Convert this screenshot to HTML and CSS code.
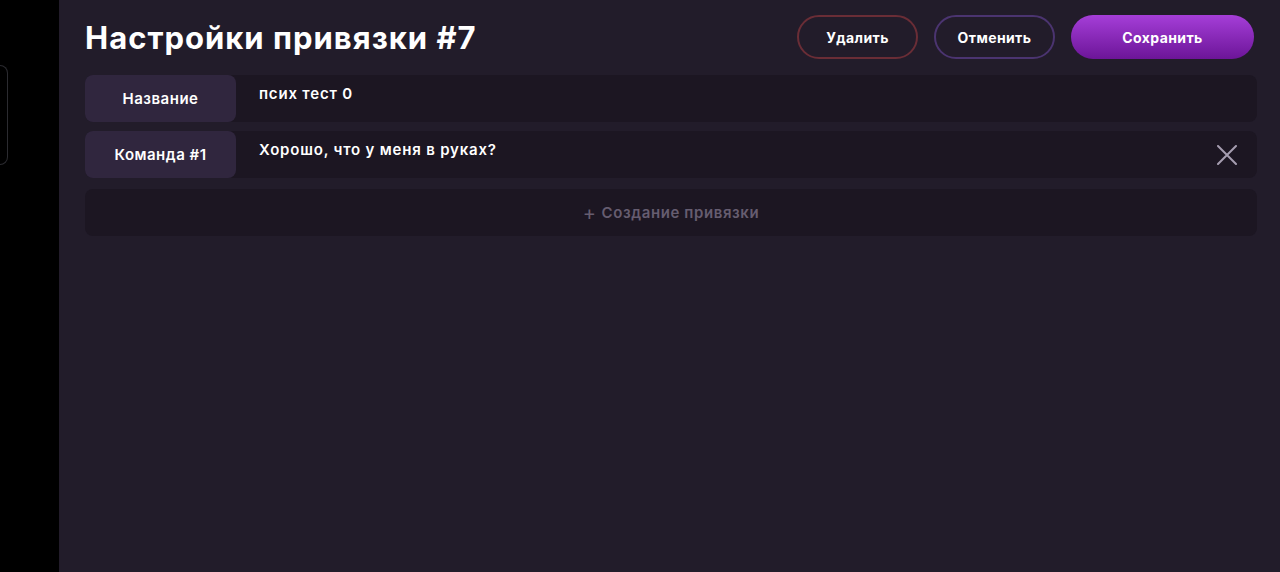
FILE: index.html
```html
<!DOCTYPE html>
<html>
<head>
	<title>Настройки привязки</title>
	<meta charset="UTF-8">
	<link rel="stylesheet" href="styles.css">
</head>
<body>
	<div id="app">
		<div id="sidebar">
			<div class="side_card"></div>
		</div>
		<div id="main">
			<div id="header">
				<h1 id="title">Настройки привязки #7</h1>
				<div id="actions">
					<button class="btn btn_delete">Удалить</button>
					<button class="btn btn_cancel">Отменить</button>
					<button class="btn btn_save">Сохранить</button>
				</div>
			</div>
			<div class="field">
				<div class="field_label">Название</div>
				<div class="field_value">псих тест 0</div>
			</div>
			<div class="field">
				<div class="field_label">Команда #1</div>
				<div class="field_value">Хорошо, что у меня в руках?</div>
				<div class="field_remove">
					<svg width="20" height="20" viewBox="0 0 20 20">
						<path d="M1 1 L19 19 M19 1 L1 19" stroke="#a59db0" stroke-width="2" fill="none" stroke-linecap="round" />
					</svg>
				</div>
			</div>
			<div class="add_row"><span class="plus">+</span> Создание привязки</div>
		</div>
	</div>
</body>
</html>
```

FILE: styles.css
```css
html, body {
	margin: 0;
	height: 100%;
	background-color: black;
	font-family: "Inter", "Noto Sans", sans-serif;
	color: white;
}

#app {
	display: flex;
	height: 100%;
}

#sidebar {
	width: 59px;
	flex-shrink: 0;
	padding-top: 65px;
	box-sizing: border-box;
}

.side_card {
	width: 7px;
	height: 98px;
	border: 1px solid #2b2b30;
	border-left: none;
	border-radius: 0 8px 8px 0;
}

#main {
	flex: 1;
	background-color: #221c2a;
	padding: 15px 23px 0 26px;
	display: flex;
	flex-direction: column;
	gap: 9px;
}

#header {
	display: flex;
	align-items: center;
	justify-content: space-between;
	height: 44px;
	margin-bottom: 7px;
}

#title {
	margin: 0;
	font-size: 31px;
	font-weight: 700;
	letter-spacing: 1px;
}

#actions {
	display: flex;
	gap: 16px;
	margin-right: 3px;
}

.btn {
	height: 44px;
	border-radius: 22px;
	font-family: inherit;
	font-size: 14px;
	font-weight: 700;
	letter-spacing: 0.4px;
	color: white;
	background: transparent;
	border: 2px solid transparent;
	cursor: pointer;
}

.btn_delete {
	width: 121px;
	border-color: #6a2d36;
}

.btn_cancel {
	width: 121px;
	border-color: #4b3470;
}

.btn_save {
	width: 183px;
	border: none;
	background: linear-gradient( #a53ed8, #6c1598 );
}

.field {
	display: flex;
	min-height: 47px;
	background-color: #1c1622;
	border-radius: 8px;
}

.field_label {
	width: 151px;
	flex-shrink: 0;
	display: flex;
	align-items: center;
	justify-content: center;
	background-color: #30263e;
	border-radius: 8px;
	font-size: 15px;
	font-weight: 600;
	letter-spacing: 0.5px;
}

.field_value {
	flex: 1;
	padding: 9px 23px;
	font-size: 15px;
	font-weight: 600;
	line-height: 20px;
	letter-spacing: 0.8px;
}

.field_remove {
	padding: 14px 20px 0 0;
}

.add_row {
	height: 47px;
	margin-top: 2px;
	display: flex;
	align-items: center;
	justify-content: center;
	background-color: #1c1622;
	border-radius: 8px;
	color: #665d70;
	font-size: 15px;
	font-weight: 600;
	letter-spacing: 0.6px;
}

.plus {
	font-size: 20px;
	font-weight: 400;
	margin-right: 5px;
}
```
